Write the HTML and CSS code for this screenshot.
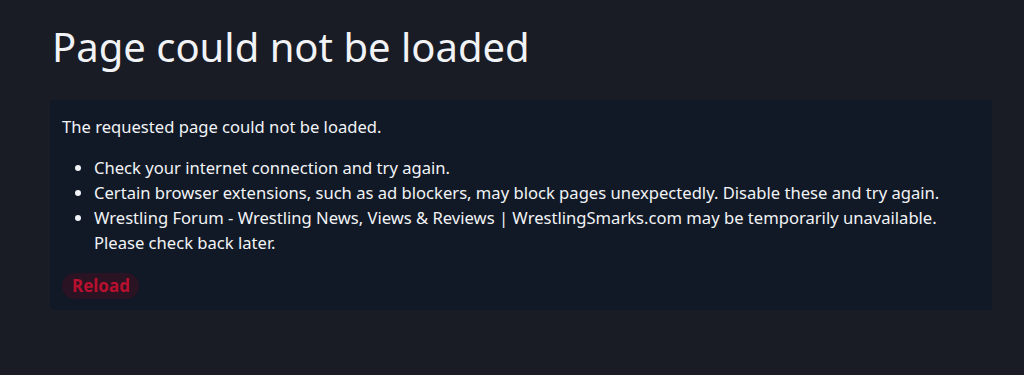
FILE: index.html
```html
<!DOCTYPE html>
<html lang="en">
<head>
  <meta charset="UTF-8" />
  <title>Page could not be loaded</title>
  <link rel="stylesheet" href="styles.css">
</head>
<body>
  <main class="page">
    <h1 class="title">Page could not be loaded</h1>

    <div class="error-card">
      <p>The requested page could not be loaded.</p>
      <ul class="hints">
        <li>Check your internet connection and try again.</li>
        <li>Certain browser extensions, such as ad blockers, may block pages unexpectedly. Disable these and try again.</li>
        <li>Wrestling Forum - Wrestling News, Views &amp; Reviews | WrestlingSmarks.com may be temporarily unavailable. Please check back later.</li>
      </ul>
      <button class="reload" onclick="location.reload()">Reload</button>
    </div>
  </main>
</body>
</html>
```

FILE: styles.css
```css
:root {
  --bg: #191c24;
  --card: #111926;
  --text: #f1f3f6;
  --accent: #b8102f;
  --accent-bg: #2a1322;
}

*, *::before, *::after {
  box-sizing: border-box;
}

body {
  margin: 0;
  background-color: var(--bg);
  color: var(--text);
  font-family: 'Noto Sans', sans-serif;
}

.page {
  padding: 18px 32px 0 50px;
}

.title {
  margin: 0 0 24px 2px;
  font-size: 40px;
  font-weight: 400;
  line-height: 58px;
}

.error-card {
  background-color: var(--card);
  border-radius: 3px;
  padding: 14px 12px 11px;
  font-size: 16.6px;
  line-height: 25px;
}

.error-card p {
  margin: 0 0 16px;
}

.hints {
  margin: 0 0 18px;
  padding-left: 32px;
}

.reload {
  font-family: inherit;
  font-size: 17px;
  font-weight: 700;
  color: var(--accent);
  background-color: var(--accent-bg);
  border: none;
  border-radius: 13px;
  padding: 0 9px 0 10px;
  height: 26px;
  line-height: 26px;
  cursor: pointer;
}
```
